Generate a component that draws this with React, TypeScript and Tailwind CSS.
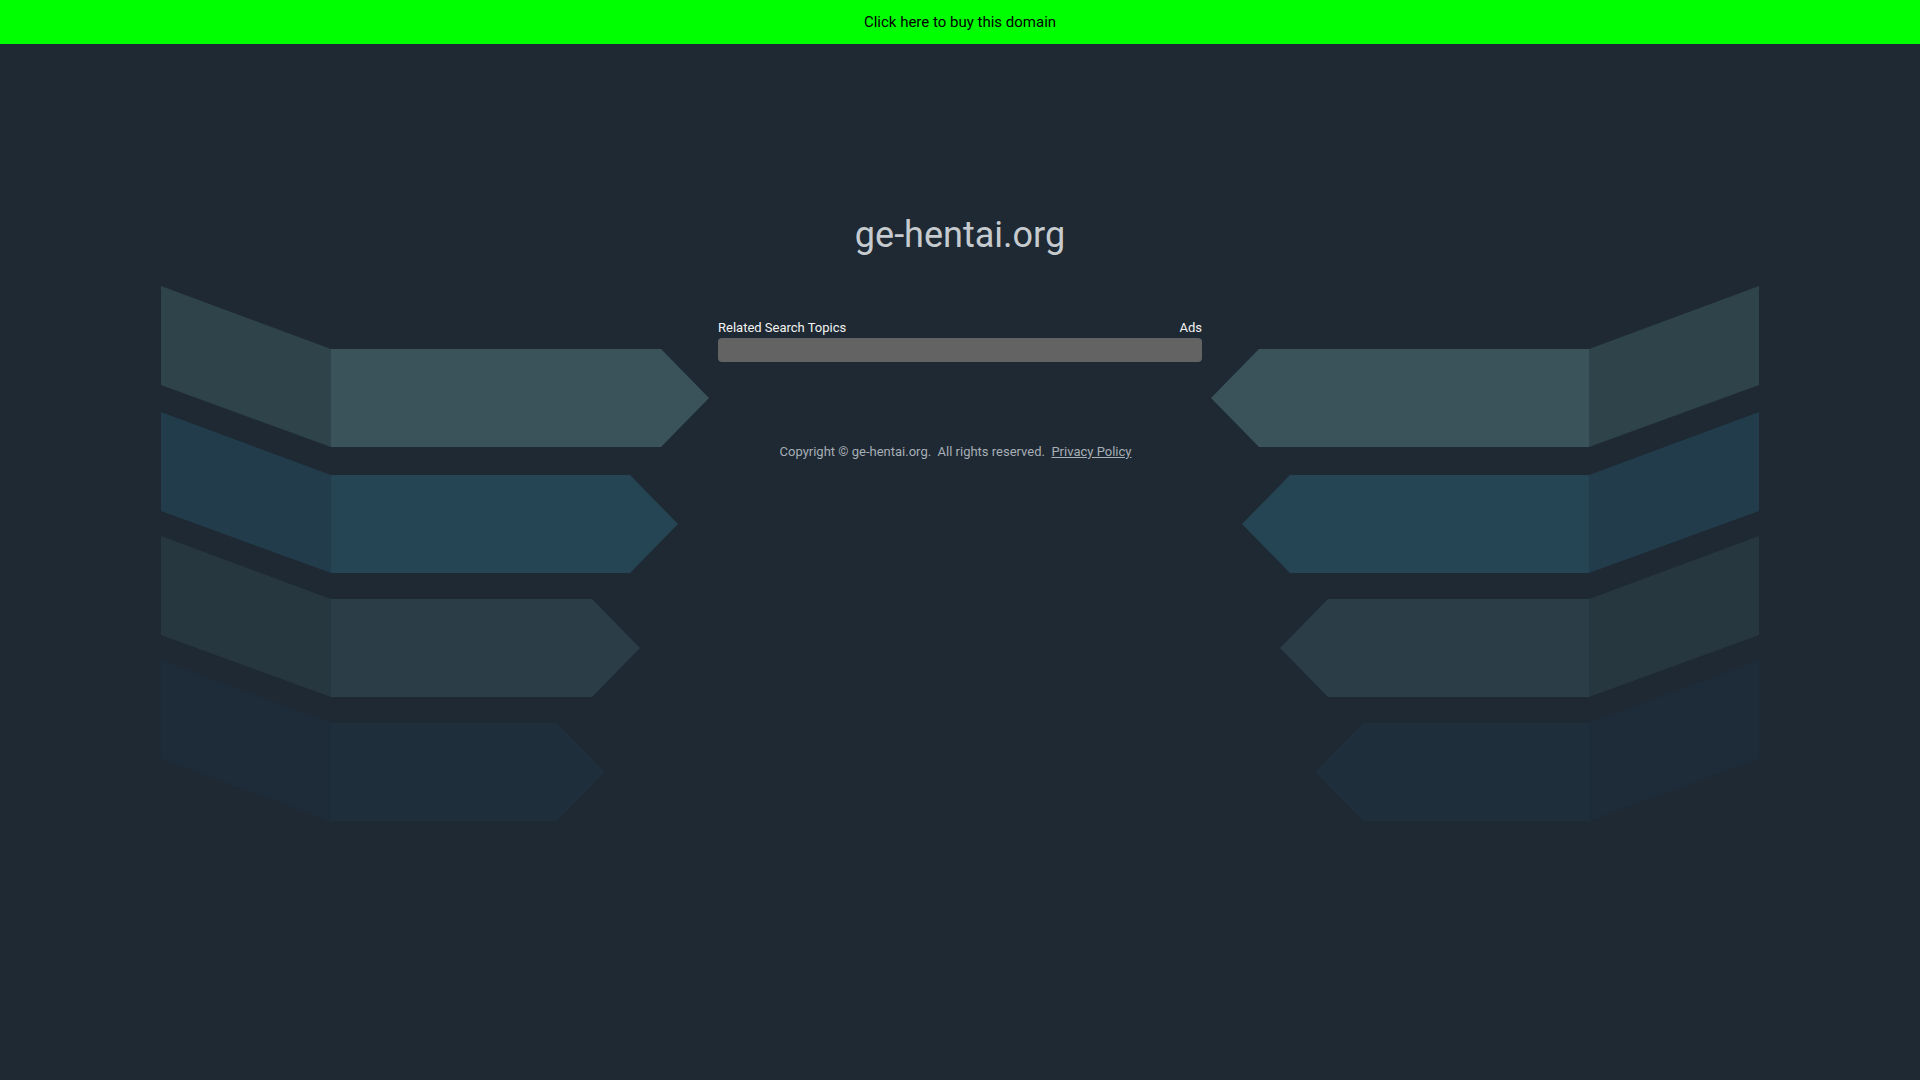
import React from 'react';

const rows = [
  { top: 63, end: 500, front: '#3a535b', back: '#2f434b' },
  { top: 189, end: 469, front: '#254555', back: '#223c4b' },
  { top: 313, end: 431, front: '#2b3d46', back: '#27373f' },
  { top: 437, end: 396, front: '#1f2e3b', back: '#1e2c39' },
];

// decorative arrow stack, drawn for the left side and mirrored for the right
const Arrows = ({ flip }: { flip?: boolean }) => (
  <svg
    width="548"
    height="540"
    viewBox="0 0 548 540"
    className={`shrink-0 ${flip ? '-scale-x-100' : ''}`}
  >
    {rows.map((r, i) => (
      <g key={i}>
        <polygon points={`0,${r.top - 63} 170,${r.top} 170,${r.top + 98} 0,${r.top + 36}`} fill={r.back} />
        <polygon
          points={`170,${r.top} ${r.end},${r.top} ${r.end + 48},${r.top + 49} ${r.end},${r.top + 98} 170,${r.top + 98}`}
          fill={r.front}
        />
      </g>
    ))}
  </svg>
);

const App = () => {
  return (
    <div className="min-h-screen bg-[#1e2933] font-['Roboto','Liberation_Sans',sans-serif]">
      <a href="#" className="flex h-[44px] items-center justify-center bg-[#00ff00] text-[15px] text-black">
        Click here to buy this domain
      </a>

      <h1 className="mt-[169px] text-center text-[36px] leading-[44px] text-[#c6cbd0]">ge-hentai.org</h1>

      <div className="mt-[29px] flex justify-center gap-[9px]">
        <Arrows />
        <div className="w-[484px] shrink-0 pt-[34px]">
          <div className="flex items-end justify-between text-[13px] leading-[16px] text-[#f2f2f2]">
            <span>Related Search Topics</span>
            <span>Ads</span>
          </div>
          <div className="mt-[2px] h-[24px] rounded-[4px] bg-[#636363]" />
          <p className="mt-[81px] pr-[9px] text-center text-[13px] leading-[17px] text-[#a7aeb5]">
            Copyright © ge-hentai.org.&nbsp; All rights reserved.&nbsp;{' '}
            <a href="#" className="underline">Privacy Policy</a>
          </p>
        </div>
        <Arrows flip />
      </div>
    </div>
  );
};

export default App;
